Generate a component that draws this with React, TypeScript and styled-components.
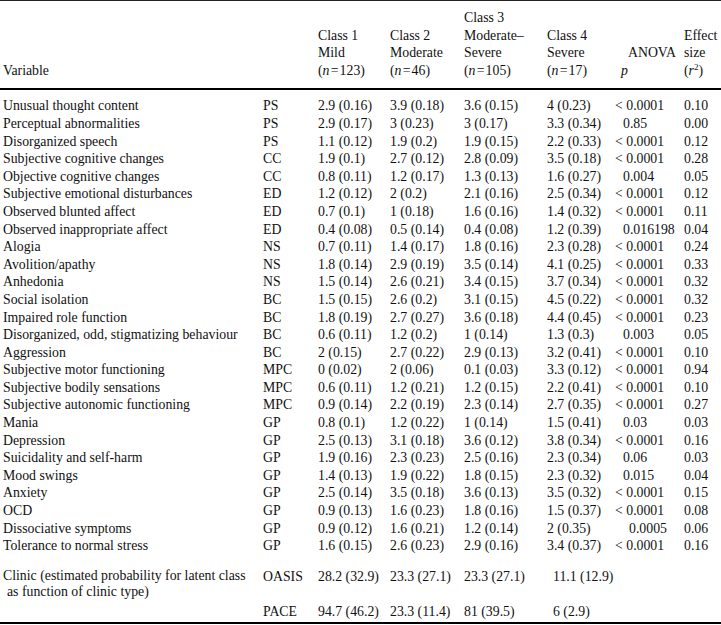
import React from 'react';
import styled, { createGlobalStyle } from 'styled-components';

const GlobalStyle = createGlobalStyle`
  body {
    margin: 0;
    background: #fff;
  }
`;

const COLS = '263px 55px 72px 74px 83px 68px 69px 37px';

const Table = styled.div`
  width: 721px;
  font-family: 'Liberation Serif', 'Times New Roman', serif;
  font-size: 13.8px;
  line-height: 17.6px;
  color: #111;
  border-top: 1px solid #222;
  border-bottom: 2px solid #000;
`;

const Head = styled.div`
  display: grid;
  grid-template-columns: ${COLS};
  align-items: end;
  padding: 8px 0 9px;
  border-bottom: 2px solid #000;
`;

const Body = styled.div`
  padding: 7px 0 2px;
`;

const Row = styled.div<{ $gap?: number }>`
  display: grid;
  grid-template-columns: ${COLS};
  align-items: start;
  margin-top: ${({ $gap }) => $gap ?? 0}px;
`;

const Cell = styled.div<{ $indent?: number }>`
  padding-left: ${({ $indent }) => $indent ?? 0}px;
  white-space: nowrap;
`;

const VarCell = styled(Cell)`
  padding-left: 3px;
`;

// the two-line clinic label is set a little tighter than the data rows
const ClinicLabel = styled(VarCell)`
  line-height: 16px;
`;

const HangLine = styled.span`
  display: block;
  padding-left: 4px;
`;

const Line = styled.span<{ $indent?: number; $right?: number }>`
  display: block;
  padding-left: ${({ $indent }) => $indent ?? 0}px;
  ${({ $right }) => ($right !== undefined ? `text-align: right; padding-right: ${$right}px;` : '')}
`;

const Em = styled.i`
  font-style: italic;
`;

const Sup = styled.sup`
  font-size: 9px;
  line-height: 0;
  vertical-align: 5px;
`;

type DataRow = [string, string, string, string, string, string, string, string];

const rows: DataRow[] = [
  ['Unusual thought content', 'PS', '2.9 (0.16)', '3.9 (0.18)', '3.6 (0.15)', '4 (0.23)', '< 0.0001', '0.10'],
  ['Perceptual abnormalities', 'PS', '2.9 (0.17)', '3 (0.23)', '3 (0.17)', '3.3 (0.34)', '0.85', '0.00'],
  ['Disorganized speech', 'PS', '1.1 (0.12)', '1.9 (0.2)', '1.9 (0.15)', '2.2 (0.33)', '< 0.0001', '0.12'],
  ['Subjective cognitive changes', 'CC', '1.9 (0.1)', '2.7 (0.12)', '2.8 (0.09)', '3.5 (0.18)', '< 0.0001', '0.28'],
  ['Objective cognitive changes', 'CC', '0.8 (0.11)', '1.2 (0.17)', '1.3 (0.13)', '1.6 (0.27)', '0.004', '0.05'],
  ['Subjective emotional disturbances', 'ED', '1.2 (0.12)', '2 (0.2)', '2.1 (0.16)', '2.5 (0.34)', '< 0.0001', '0.12'],
  ['Observed blunted affect', 'ED', '0.7 (0.1)', '1 (0.18)', '1.6 (0.16)', '1.4 (0.32)', '< 0.0001', '0.11'],
  ['Observed inappropriate affect', 'ED', '0.4 (0.08)', '0.5 (0.14)', '0.4 (0.08)', '1.2 (0.39)', '0.016198', '0.04'],
  ['Alogia', 'NS', '0.7 (0.11)', '1.4 (0.17)', '1.8 (0.16)', '2.3 (0.28)', '< 0.0001', '0.24'],
  ['Avolition/apathy', 'NS', '1.8 (0.14)', '2.9 (0.19)', '3.5 (0.14)', '4.1 (0.25)', '< 0.0001', '0.33'],
  ['Anhedonia', 'NS', '1.5 (0.14)', '2.6 (0.21)', '3.4 (0.15)', '3.7 (0.34)', '< 0.0001', '0.32'],
  ['Social isolation', 'BC', '1.5 (0.15)', '2.6 (0.2)', '3.1 (0.15)', '4.5 (0.22)', '< 0.0001', '0.32'],
  ['Impaired role function', 'BC', '1.8 (0.19)', '2.7 (0.27)', '3.6 (0.18)', '4.4 (0.45)', '< 0.0001', '0.23'],
  ['Disorganized, odd, stigmatizing behaviour', 'BC', '0.6 (0.11)', '1.2 (0.2)', '1 (0.14)', '1.3 (0.3)', '0.003', '0.05'],
  ['Aggression', 'BC', '2 (0.15)', '2.7 (0.22)', '2.9 (0.13)', '3.2 (0.41)', '< 0.0001', '0.10'],
  ['Subjective motor functioning', 'MPC', '0 (0.02)', '2 (0.06)', '0.1 (0.03)', '3.3 (0.12)', '< 0.0001', '0.94'],
  ['Subjective bodily sensations', 'MPC', '0.6 (0.11)', '1.2 (0.21)', '1.2 (0.15)', '2.2 (0.41)', '< 0.0001', '0.10'],
  ['Subjective autonomic functioning', 'MPC', '0.9 (0.14)', '2.2 (0.19)', '2.3 (0.14)', '2.7 (0.35)', '< 0.0001', '0.27'],
  ['Mania', 'GP', '0.8 (0.1)', '1.2 (0.22)', '1 (0.14)', '1.5 (0.41)', '0.03', '0.03'],
  ['Depression', 'GP', '2.5 (0.13)', '3.1 (0.18)', '3.6 (0.12)', '3.8 (0.34)', '< 0.0001', '0.16'],
  ['Suicidality and self-harm', 'GP', '1.9 (0.16)', '2.3 (0.23)', '2.5 (0.16)', '2.3 (0.34)', '0.06', '0.03'],
  ['Mood swings', 'GP', '1.4 (0.13)', '1.9 (0.22)', '1.8 (0.15)', '2.3 (0.32)', '0.015', '0.04'],
  ['Anxiety', 'GP', '2.5 (0.14)', '3.5 (0.18)', '3.6 (0.13)', '3.5 (0.32)', '< 0.0001', '0.15'],
  ['OCD', 'GP', '0.9 (0.13)', '1.6 (0.23)', '1.8 (0.16)', '1.5 (0.37)', '< 0.0001', '0.08'],
  ['Dissociative symptoms', 'GP', '0.9 (0.12)', '1.6 (0.21)', '1.2 (0.14)', '2 (0.35)', '0.0005', '0.06'],
  ['Tolerance to normal stress', 'GP', '1.6 (0.15)', '2.6 (0.23)', '2.9 (0.16)', '3.4 (0.37)', '< 0.0001', '0.16'],
];

// p-values without "<" sit a little further in
const pIndent = (p: string) => (p.startsWith('<') ? 0 : p === '0.0005' ? 14 : 8);

const N = ({ v }: { v: string }) => (
  <Line>
    (<Em>n</Em>{'\u200a=\u200a'}{v})
  </Line>
);

export default function App() {
  return (
    <>
      <GlobalStyle />
      <Table>
        <Head>
          <VarCell>Variable</VarCell>
          <Cell />
          <Cell>
            <Line>Class 1</Line>
            <Line>Mild</Line>
            <N v="123" />
          </Cell>
          <Cell>
            <Line>Class 2</Line>
            <Line>Moderate</Line>
            <N v="46" />
          </Cell>
          <Cell>
            <Line>Class 3</Line>
            <Line>Moderate–</Line>
            <Line>Severe</Line>
            <N v="105" />
          </Cell>
          <Cell>
            <Line>Class 4</Line>
            <Line>Severe</Line>
            <N v="17" />
          </Cell>
          <Cell>
            <Line $right={8}>ANOVA</Line>
            <Line $indent={6}>
              <Em>p</Em>
            </Line>
          </Cell>
          <Cell>
            <Line>Effect</Line>
            <Line>size</Line>
            <Line>
              (<Em>r</Em>
              <Sup>2</Sup>)
            </Line>
          </Cell>
        </Head>
        <Body>
          {rows.map(([name, code, c1, c2, c3, c4, p, r2]) => (
            <Row key={name}>
              <VarCell>{name}</VarCell>
              <Cell>{code}</Cell>
              <Cell>{c1}</Cell>
              <Cell>{c2}</Cell>
              <Cell>{c3}</Cell>
              <Cell>{c4}</Cell>
              <Cell $indent={pIndent(p)}>{p}</Cell>
              <Cell>{r2}</Cell>
            </Row>
          ))}
          <Row $gap={13}>
            <ClinicLabel>
              Clinic (estimated probability for latent class
              <HangLine>as function of clinic type)</HangLine>
            </ClinicLabel>
            <Cell>OASIS</Cell>
            <Cell>28.2 (32.9)</Cell>
            <Cell>23.3 (27.1)</Cell>
            <Cell>23.3 (27.1)</Cell>
            <Cell $indent={6}>11.1 (12.9)</Cell>
          </Row>
          <Row $gap={3}>
            <VarCell />
            <Cell>PACE</Cell>
            <Cell>94.7 (46.2)</Cell>
            <Cell>23.3 (11.4)</Cell>
            <Cell>81 (39.5)</Cell>
            <Cell $indent={6}>6 (2.9)</Cell>
          </Row>
        </Body>
      </Table>
    </>
  );
}
